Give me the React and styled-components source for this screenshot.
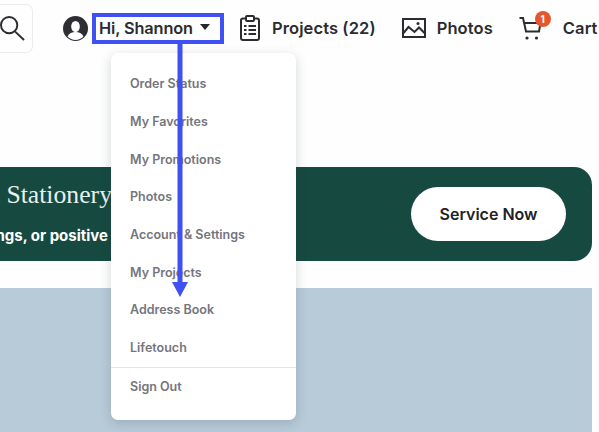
import React from "react";
import styled, { createGlobalStyle } from "styled-components";

const GlobalStyle = createGlobalStyle`
  html, body {
    margin: 0;
    padding: 0;
    background: #fefefe;
  }
  body {
    font-family: Inter, "Liberation Sans", sans-serif;
  }
`;

const Page = styled.div`
  position: relative;
  width: 599px;
  height: 432px;
  overflow: hidden;
`;

const Header = styled.header`
  display: flex;
  align-items: center;
  height: 56px;
  color: #2b2b30;
`;

const SearchBox = styled.div`
  display: flex;
  align-items: center;
  justify-content: flex-end;
  box-sizing: border-box;
  width: 33px;
  height: 49px;
  padding-right: 7px;
  border: 1px solid #ececec;
  border-left: none;
  border-radius: 0 7px 7px 0;
`;

const NavItem = styled.div`
  display: flex;
  align-items: center;
  gap: ${({ $gap }) => $gap}px;
  margin-left: ${({ $left }) => $left}px;
  font-size: 16.5px;
  font-weight: 600;
  letter-spacing: 0.1px;
  white-space: nowrap;
`;

const Greeting = styled.div`
  position: relative;
  display: flex;
  align-items: center;
  justify-content: space-between;
  box-sizing: border-box;
  width: 132px;
  height: 31px;
  margin-left: 4px;
  padding: 0 10px 0 3px;
  border: 4px solid #3f51f2;
  font-size: 16.3px;
  font-weight: 600;
  letter-spacing: -0.1px;
  white-space: nowrap;
`;

const Caret = styled.span`
  width: 0;
  height: 0;
  border-left: 5px solid transparent;
  border-right: 5px solid transparent;
  border-top: 6px solid #26262b;
  margin-top: -3px;
`;

const IconWrap = styled.span`
  position: relative;
  display: flex;
`;

const Badge = styled.span`
  position: absolute;
  top: -6px;
  right: -9px;
  display: flex;
  align-items: center;
  justify-content: center;
  width: 16px;
  height: 16px;
  border-radius: 50%;
  background: #e4572e;
  color: #fff;
  font-size: 10px;
  font-weight: 700;
`;

const Banner = styled.section`
  display: flex;
  align-items: center;
  justify-content: space-between;
  box-sizing: border-box;
  width: 592px;
  height: 94px;
  margin-top: 111px;
  padding-right: 26px;
  border-radius: 0 18px 18px 0;
  background: #164a41;
  color: #fff;
`;

const BannerText = styled.div`
  display: flex;
  flex-direction: column;
  align-items: flex-end;
  width: 112px;
`;

const BannerTitle = styled.div`
  margin-top: -2px;
  font-family: "Liberation Serif", serif;
  font-size: 25.7px;
  line-height: 30px;
  color: #e8f1ee;
  white-space: nowrap;
`;

const BannerSub = styled.div`
  margin-top: 16px;
  margin-right: 4px;
  font-size: 15px;
  line-height: 20px;
  font-weight: 700;
  white-space: nowrap;
`;

const ServiceButton = styled.div`
  display: flex;
  align-items: center;
  justify-content: center;
  width: 155px;
  height: 54px;
  margin-top: -1px;
  border-radius: 27px;
  background: #fff;
  color: #222226;
  font-size: 16px;
  font-weight: 600;
`;

const Hero = styled.div`
  width: 592px;
  height: 144px;
  margin-top: 27px;
  background: #b7cbd9;
`;

const Menu = styled.nav`
  position: absolute;
  top: 53px;
  left: 111px;
  box-sizing: border-box;
  width: 185px;
  height: 367px;
  padding-top: 12px;
  border-radius: 7px;
  background: #fff;
  box-shadow: 0 3px 12px rgba(40, 50, 60, 0.2);
`;

const MenuItem = styled.div`
  display: flex;
  align-items: center;
  height: 37.7px;
  padding-left: 19px;
  color: #75757c;
  font-size: 12.5px;
  font-weight: 600;
`;

const MenuDivider = styled.div`
  height: 1px;
  background: #e4e4e6;
`;

const SignOut = styled(MenuItem)`
  height: 38px;
`;

const Arrow = styled.svg`
  position: absolute;
  top: 42px;
  left: 170px;
`;

const SearchIcon = () => (
  <svg width="26" height="26" viewBox="0 0 26 26" fill="none" stroke="#2b2b30" strokeWidth="2">
    <circle cx="9.5" cy="10" r="8.5" />
    <path d="M15.5 16.5 25 25.5" />
  </svg>
);

const UserIcon = () => (
  <svg width="25" height="25" viewBox="0 0 25 25">
    <circle cx="12.5" cy="12.5" r="12.5" fill="#2e2e33" />
    <ellipse cx="12.5" cy="10.5" rx="4.3" ry="5.6" fill="#fff" />
    <path d="M4.5 20.5c1.5-3.4 4.5-4.6 8-4.600s6.500 1.200 8 4.600a11 11 0 0 1-16 0z" fill="#fff" />
  </svg>
);

const ClipboardIcon = () => (
  <svg width="20" height="26" viewBox="0 0 20 26" fill="none" stroke="#2b2b30" strokeWidth="2">
    <rect x="1" y="3.500" width="18" height="21.500" rx="2" />
    <rect x="6" y="1" width="8" height="5" rx="1" fill="#fff" />
    <path d="M4 11h2.500M8.500 11h7.500M4 15h2.500M8.500 15h7.500M4 19h2.500M8.500 19h7.500" />
  </svg>
);

const PhotoIcon = () => (
  <svg width="25" height="20" viewBox="0 0 25 20" fill="none" stroke="#2b2b30" strokeWidth="2">
    <rect x="2" y="1" width="22" height="18" />
    <path d="M2.500 15 7.500 9l6 5 4.500-4.500 5.500 5.500" />
    <circle cx="17" cy="5.500" r="1.500" fill="#2b2b30" stroke="none" />
  </svg>
);

const CartIcon = () => (
  <svg width="23" height="23" viewBox="0 0 23 23" fill="none" stroke="#2b2b30" strokeWidth="2">
    <path d="M0.500 1H4l3 13.500h13L21.500 6H5" />
    <circle cx="8" cy="21" r="1.600" fill="#2b2b30" stroke="none" />
    <circle cx="17.500" cy="21" r="1.600" fill="#2b2b30" stroke="none" />
  </svg>
);

const menuLinks = [
  "Order Status",
  "My Favorites",
  "My Promotions",
  "Photos",
  "Account & Settings",
  "My Projects",
  "Address Book",
  "Lifetouch",
];

export default function App() {
  return (
    <Page>
      <GlobalStyle />
      <Header>
        <SearchBox>
          <SearchIcon />
        </SearchBox>
        <NavItem $left={30}>
          <UserIcon />
        </NavItem>
        <Greeting>
          Hi, Shannon
          <Caret />
        </Greeting>
        <NavItem $left={16} $gap={12}>
          <ClipboardIcon />
          Projects (22)
        </NavItem>
        <NavItem $left={25} $gap={11}>
          <PhotoIcon />
          Photos
        </NavItem>
        <NavItem $left={26} $gap={21}>
          <IconWrap>
            <CartIcon />
            <Badge>1</Badge>
          </IconWrap>
          Cart
        </NavItem>
      </Header>
      <Banner>
        <BannerText>
          <BannerTitle>t Stationery</BannerTitle>
          <BannerSub>ngs, or positive</BannerSub>
        </BannerText>
        <ServiceButton>Service Now</ServiceButton>
      </Banner>
      <Hero />
      <Menu>
        {menuLinks.map((link) => (
          <MenuItem key={link}>{link}</MenuItem>
        ))}
        <MenuDivider />
        <SignOut>Sign Out</SignOut>
      </Menu>
      <Arrow width="20" height="256" viewBox="0 0 20 256">
        <path d="M7.500 0h5v240h5.500L10 255 2 240h5.500z" fill="#3f51f2" />
      </Arrow>
    </Page>
  );
}
